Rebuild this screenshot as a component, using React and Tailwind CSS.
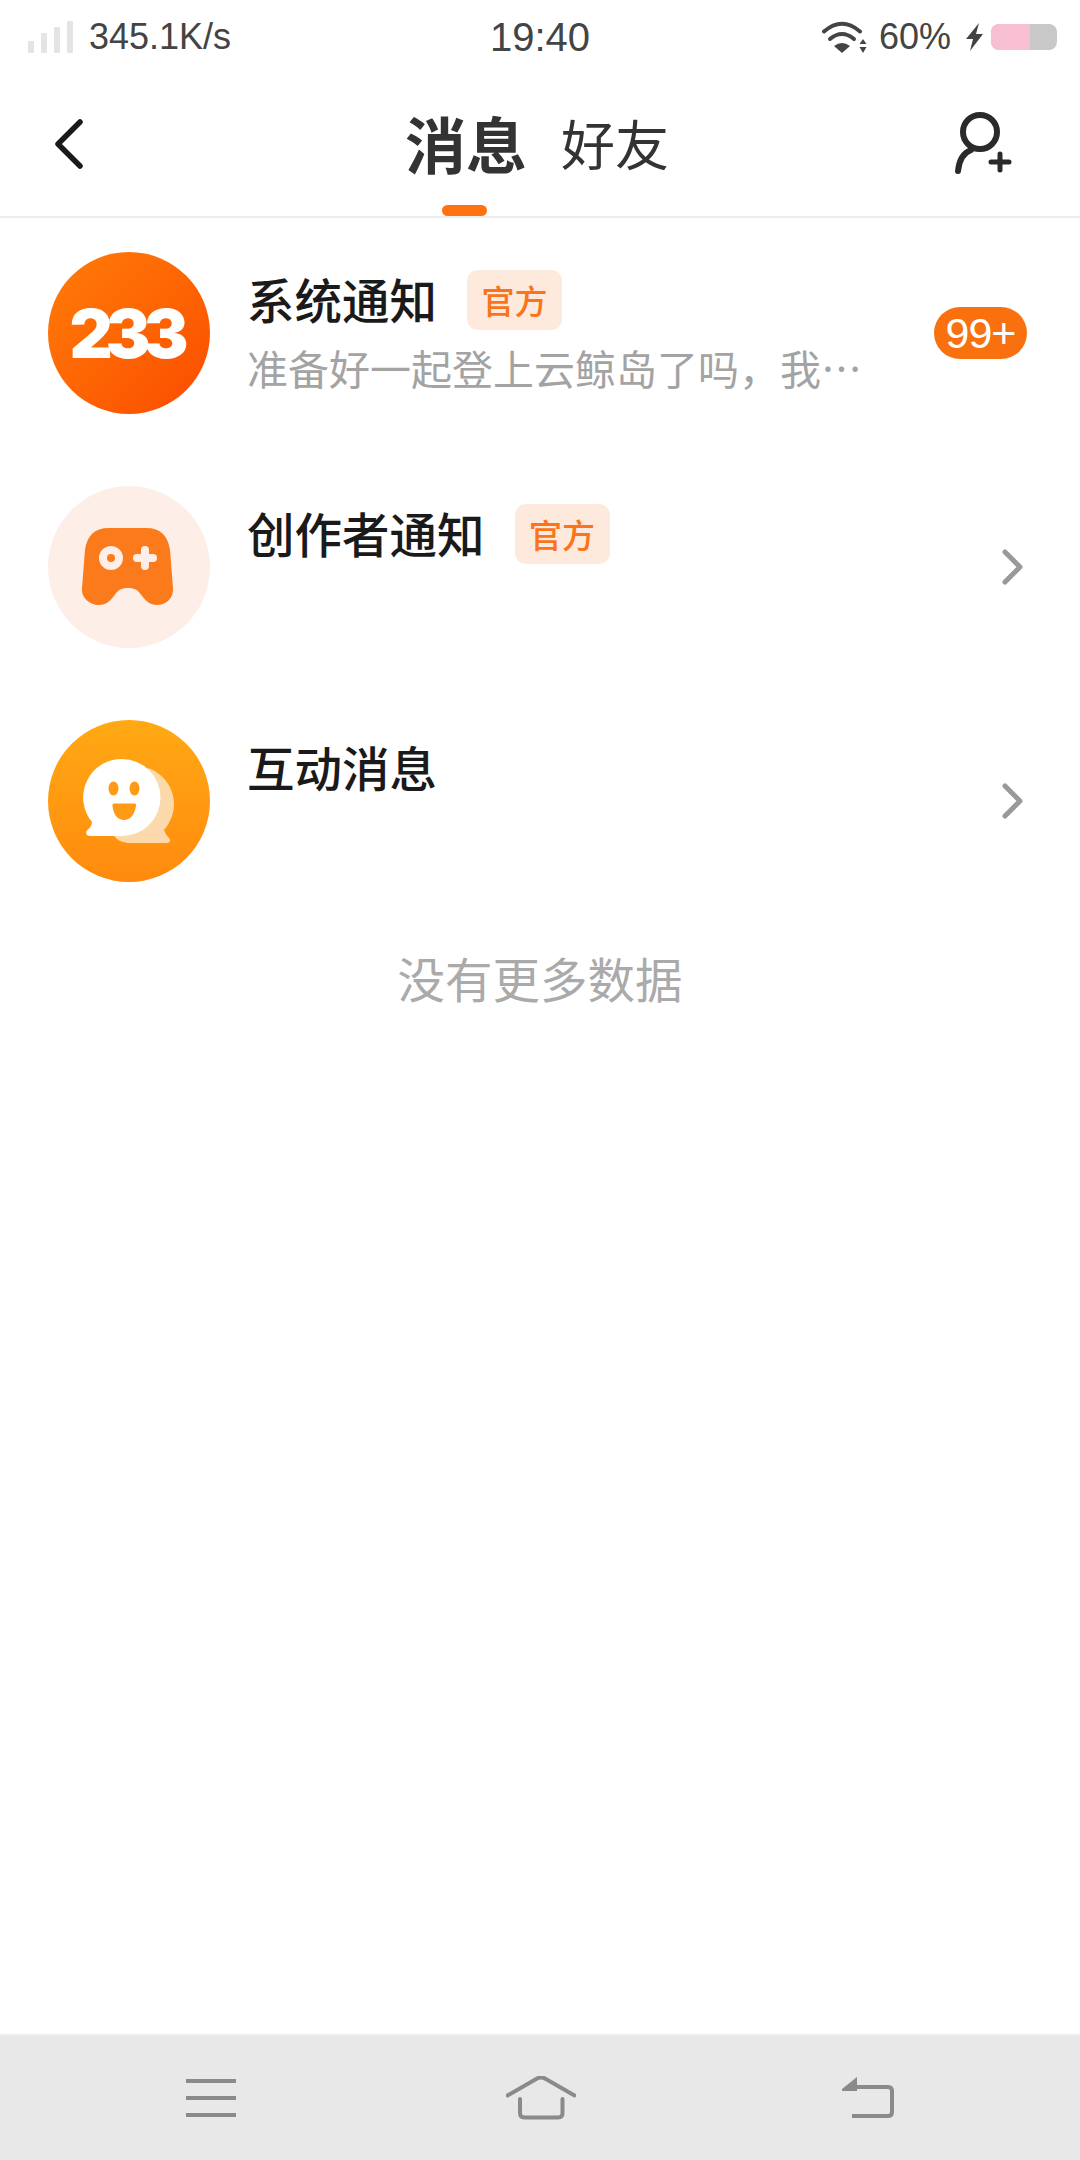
import React from "react";

const cjk = "font-['Noto_Sans_CJK_SC','Noto_Sans',sans-serif]";
const latin = "font-['Liberation_Sans',Arial,sans-serif]";

const StatusBar = () => (
  <div className={`h-[76px] flex-none grid grid-cols-[1fr_auto_1fr] items-center pb-[2px] text-[#444444] ${latin}`}>
    <div className="flex items-center pl-[28px]">
      <div className="flex items-end gap-[7px] h-[32px]">
        <div className="w-[6px] h-[12px] bg-[#e4e4e4] rounded-[1px]" />
        <div className="w-[6px] h-[20px] bg-[#e4e4e4] rounded-[1px]" />
        <div className="w-[6px] h-[26px] bg-[#e4e4e4] rounded-[1px]" />
        <div className="w-[6px] h-[32px] bg-[#e4e4e4] rounded-[1px]" />
      </div>
      <span className="ml-[16px] text-[36px] leading-none">345.1K/s</span>
    </div>
    <span className="text-[40px] leading-none">19:40</span>
    <div className="flex items-center justify-end pr-[23px]">
      <svg width="45" height="32" viewBox="0 0 45 32" fill="none">
        <path d="M2 10.500Q20 -5 38 10.500" stroke="#444" strokeWidth="4" strokeLinecap="round" />
        <path d="M8 18Q20 8 32 18" stroke="#444" strokeWidth="4" strokeLinecap="round" />
        <path d="M12 25Q20 19 28 25L20 32Z" fill="#444" />
        <path d="M41 18L44.500 23H37.500Z M37.500 26H44.500L41 32Z" fill="#444" />
      </svg>
      <span className="ml-[12px] text-[36px] leading-none">60%</span>
      <svg className="ml-[15px]" width="17" height="28" viewBox="0 0 17 28">
        <path d="M13 0L0 16H7L4 28L17 11H10Z" fill="#444" />
      </svg>
      <div className="ml-[8px] w-[66px] h-[26px] rounded-[8px] bg-[#c8c8c8] overflow-hidden">
        <div className="w-[39px] h-full bg-[#f8bfd3]" />
      </div>
    </div>
  </div>
);

const Header = () => (
  <div className={`h-[142px] flex-none grid grid-cols-[1fr_auto_1fr] items-center border-b-2 border-[#ededed] ${cjk}`}>
    <div className="pl-[55px] pb-[4px]">
      <svg className="block" width="28" height="50" viewBox="0 0 28 50" fill="none">
        <path d="M25 3L3 25L25 47" stroke="#1a1a1a" strokeWidth="5.500" strokeLinecap="round" strokeLinejoin="round" />
      </svg>
    </div>
    <div className="relative flex items-center h-full mr-[6px]">
      <div className="relative h-full flex items-center">
        <span className="pb-[8px] text-[61px] font-bold text-[#333333] leading-none">消息</span>
        <div className="absolute bottom-0 left-[37px] w-[45px] h-[11px] rounded-[6px] bg-[#ff7210]" />
      </div>
      <span className="ml-[34px] pb-[6px] text-[54px] text-[#333333] leading-none">好友</span>
    </div>
    <div className="flex justify-end pr-[66px] pb-[4px]">
      <svg className="block" width="60" height="66" viewBox="0 0 60 66" fill="none" stroke="#2a2a2a" strokeWidth="6" strokeLinecap="round">
        <circle cx="26" cy="21" r="17" />
        <path d="M17 39C9 42 5 50 4 60" />
        <path d="M37 51H55M46 43V59" strokeWidth="5" />
      </svg>
    </div>
  </div>
);

const Avatar233 = () => (
  <div className="w-[162px] h-[162px] flex-none rounded-full bg-linear-to-br from-[#ff7c08] to-[#fb4a00] flex items-center justify-center">
    <span className="font-['Inter',sans-serif] font-black text-white text-[67px] leading-none tracking-[-7px] pr-[7px]">233</span>
  </div>
);

const AvatarGame = () => (
  <svg className="flex-none" width="162" height="162" viewBox="0 0 162 162">
    <circle cx="81" cy="81" r="81" fill="#fdeee7" />
    <path
      d="M61 42H98C113 42 120 50 122 64L125 102C126 112 118 119 109 119C102 119 98 115 94 110C90 104 87 102 80 102C73 102 70 104 66 110C62 115 58 119 51 119C42 119 33 112 34 102L37 64C39 50 46 42 61 42Z"
      fill="#fb7a1c"
    />
    <circle cx="63" cy="72" r="8" fill="#fb7a1c" stroke="#fdeee7" strokeWidth="8" />
    <path d="M89 72H105M97 64V80" stroke="#fdeee7" strokeWidth="8" strokeLinecap="round" />
  </svg>
);

const AvatarChat = () => (
  <div className="w-[162px] h-[162px] flex-none rounded-full bg-linear-to-b from-[#ffa914] to-[#ff8a0e] flex items-center justify-center">
    <svg className="block" width="162" height="162" viewBox="0 0 162 162">
      <path
        d="M100 48C116 54 126 68 126 84C126 94 122 103 116 110C117 113 119 116 121 118C123 120 122 123 119 123H82C76 123 70 121 66 116Z"
        fill="#fcd9ab"
      />
      <path
        d="M74 39A38.500 38.500 0 0 1 74 116H42C38 116 37 112 39.500 110C42 108 44 105 44 102A38.500 38.500 0 0 1 74 39Z"
        fill="#ffffff"
      />
      <ellipse cx="65.500" cy="68.500" rx="5" ry="7" fill="#ff9a16" />
      <ellipse cx="86.500" cy="68.500" rx="5" ry="7" fill="#ff9a16" />
      <path d="M66 83.500H86.500Q88.500 83.500 88 86C86.500 95 82 100 76 100C70 100 65.500 95 64.500 86Q64 83.500 66 83.500Z" fill="#ff9a16" />
    </svg>
  </div>
);

const OfficialTag = () => (
  <span className="ml-[30px] w-[95px] h-[60px] flex items-center justify-center rounded-[11px] bg-[#fdeadd] text-[#f9741a] text-[33px] font-medium leading-none">
    官方
  </span>
);

const Row = ({ avatar, title, tag, sub, right }) => (
  <div className="flex items-center h-[162px] pl-[48px]">
    {avatar}
    <div className="ml-[37px] flex-1 h-full flex flex-col pt-[18px]">
      <div className="flex items-center h-[60px]">
        <span className="pb-[2px] text-[47.500px] font-medium text-[#1a1a1a] leading-none">{title}</span>
        {tag && <OfficialTag />}
      </div>
      {sub && <div className="mt-[17px] text-[41px] text-[#a3a3a3] leading-none whitespace-nowrap">{sub}</div>}
    </div>
    {right}
  </div>
);

const Arrow = () => (
  <svg className="mr-[56px]" width="24" height="38" viewBox="0 0 24 38" fill="none">
    <path d="M5 4L20 19L5 34" stroke="#999999" strokeWidth="5" strokeLinecap="round" strokeLinejoin="round" />
  </svg>
);

const NavBar = () => (
  <div className="h-[126px] flex-none flex items-center justify-between px-[186px] bg-[#e8e8e8] border-t-2 border-[#eeeeee]">
    <svg width="50" height="38" viewBox="0 0 50 38">
      <path d="M0 2H50M0 19H50M0 36H50" stroke="#8a8a8a" strokeWidth="4" />
    </svg>
    <svg className="ml-[3px]" width="70" height="44" viewBox="0 0 70 44" fill="none" stroke="#8a8a8a" strokeWidth="4" strokeLinecap="round">
      <path d="M1.500 19.500L31 2.500Q35 .5 39 2.500L68.500 19.500" />
      <path d="M14 23V37Q14 41.500 18.500 41.500H52Q56.500 41.500 56.500 37V23" />
    </svg>
    <svg width="52" height="42" viewBox="0 0 52 42" fill="none">
      <path d="M15 0L0 12V14H15Z" fill="#8a8a8a" />
      <path d="M8 10H46Q50 10 50 14V35Q50 39 46 39H10" stroke="#8a8a8a" strokeWidth="4" />
    </svg>
  </div>
);

export default function App() {
  return (
    <div className={`w-[1080px] h-[2160px] flex flex-col bg-white overflow-hidden ${cjk}`}>
      <StatusBar />
      <Header />
      <div className="flex-1 flex flex-col pt-[34px] gap-[72px]">
        <Row
          avatar={<Avatar233 />}
          title="系统通知"
          tag
          sub="准备好一起登上云鲸岛了吗，我…"
          right={
            <span className={`mr-[53px] w-[93px] h-[52px] flex items-center justify-center rounded-full bg-[#f9710f] text-white text-[43px] tracking-[-1px] leading-none ${latin}`}>
              99+
            </span>
          }
        />
        <Row avatar={<AvatarGame />} title="创作者通知" tag right={<Arrow />} />
        <Row avatar={<AvatarChat />} title="互动消息" right={<Arrow />} />
        <div className="text-center text-[47.500px] text-[#aaaaaa] leading-none">没有更多数据</div>
      </div>
      <NavBar />
    </div>
  );
}
